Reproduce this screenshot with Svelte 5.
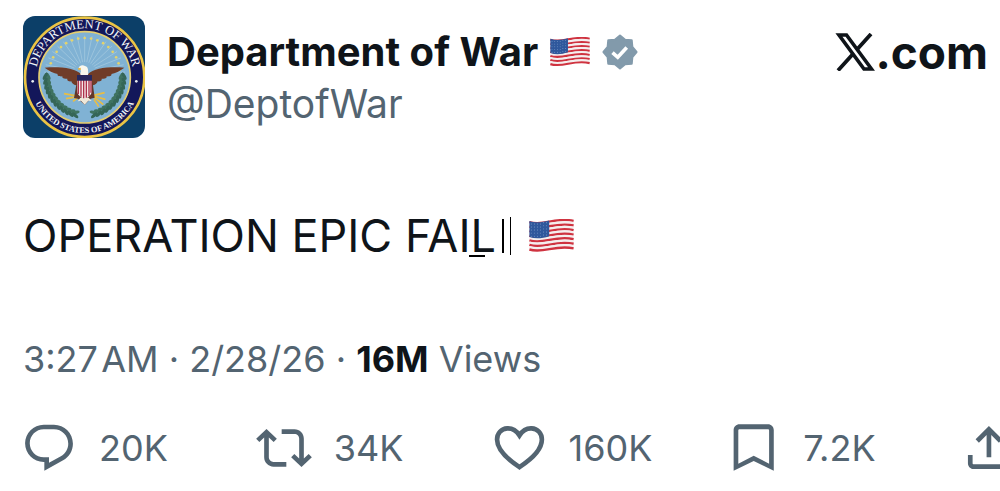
<script lang="ts">
  type Action = {
    label: string;
    count?: string;
    path: string;
    outline?: boolean;
  };

  const actions: Action[] = [
    {
      label: "Reply",
      count: "20K",
      path: "M1.751 10c0-4.42 3.584-8 8.005-8h4.366c4.49 0 8.129 3.64 8.129 8.13 0 2.96-1.607 5.68-4.196 7.11l-8.054 4.46v-3.69h-.067c-4.49.1-8.183-3.51-8.183-8.01zm8.005-6c-3.317 0-6.005 2.69-6.005 6 0 3.37 2.77 6.08 6.138 6.01l.351-.01h1.761v2.3l5.087-2.81c1.951-1.08 3.163-3.13 3.163-5.36 0-3.39-2.744-6.13-6.129-6.13H9.756z",
    },
    {
      label: "Repost",
      count: "34K",
      path: "M4.5 3.88l4.432 4.14-1.364 1.46L5.5 7.55V16c0 1.1.896 2 2 2H13v2H7.5c-2.209 0-4-1.79-4-4V7.55L1.432 9.48.068 8.02 4.5 3.88zM16.5 6H11V4h5.5c2.209 0 4 1.79 4 4v8.45l2.068-1.93 1.364 1.46-4.432 4.14-4.432-4.14 1.364-1.46 2.068 1.93V8c0-1.1-.896-2-2-2z",
    },
    {
      label: "Like",
      count: "160K",
      path: "M12.2 6.6C10.7 4.3 8.8 3.5 7 3.6 4.4 3.7 2.6 5.7 2.6 8.4c0 4.3 3.9 8.1 9.6 11.8 5.7-3.7 9.6-7.5 9.6-11.8 0-2.7-1.8-4.7-4.4-4.8-1.8-.1-3.7.7-5.2 3z",
      outline: true,
    },
    {
      label: "Bookmark",
      count: "7.2K",
      path: "M3.7 4.3c0-1.38 1.12-2.5 2.5-2.5h12.2c1.38 0 2.5 1.12 2.5 2.5v17.5l-8.6-4.2-8.6 4.2V4.3zm2.5-.3c-.28 0-.5.22-.5.5v14.2l6.6-3.4 6.6 3.4V4.5c0-.28-.22-.5-.5-.5H6.2z",
    },
    {
      label: "Share",
      path: "M12.4 2.59l5.7 5.7-1.41 1.42-3.29-3.3V16h-2V6.41l-3.3 3.3-1.41-1.42 5.71-5.7zM21.4 15l-.02 3.51c0 1.38-1.12 2.49-2.5 2.49H5.9c-1.39 0-2.5-1.12-2.5-2.5V15h2v3.5c0 .28.22.5.5.5h12.98c.28 0 .5-.22.5-.5l.02-3.5h2z",
    },
  ];

  const stripes = Array.from({ length: 13 }, (_, i) => i);

  // light rays and stars fan out above the eagle
  const rays = Array.from({ length: 17 }, (_, i) => {
    const a = ((i - 8) * 10.5 * Math.PI) / 180;
    return {
      x1: 212 + 34 * Math.sin(a),
      y1: 196 - 34 * Math.cos(a),
      x2: 212 + 122 * Math.sin(a),
      y2: 205 - 122 * Math.cos(a),
      sx: 212 + 106 * Math.sin(a),
      sy: 196 - 106 * Math.cos(a),
    };
  });

  const leaves = Array.from({ length: 12 }, (_, i) => {
    const turn = 90 - i * 7;
    const a = (turn * Math.PI) / 180;
    return {
      x: 114 * Math.sin(a),
      y: 207 + 114 * Math.cos(a),
      turn,
    };
  });
</script>

{#snippet flag()}
  <svg class="flag" viewBox="0 0 118 88" role="img" aria-label="US flag">
    {#each stripes as i}
      <path
        d="M1 {8 + i * 6}C38 {20 + i * 6} 68 {-6 + i * 6} 117 {5 + i * 6}"
        fill="none"
        stroke={i % 2 ? "#f4eeee" : "#cf3340"}
        stroke-width="6.3"
      />
    {/each}
    <path d="M1 5C18 11 34 9 53 4V45C34 51 18 53 1 47z" fill="#2f589c" />
    {#each [0, 1, 2, 3, 4] as row}
      {#each [0, 1, 2, 3, 4, 5] as col}
        <circle cx={6 + col * 8} cy={13 + row * 8 - (col > 3 ? 3 : 0)} r="1.2" fill="#a9c0e0" />
      {/each}
    {/each}
  </svg>
{/snippet}

{#snippet seal()}
  <svg class="avatar" viewBox="27 24 366 366" role="img" aria-label="Department of War seal">
    <defs>
      <path id="ring-top" d="M65 208a147 147 0 0 1 294 0" />
      <path id="ring-bottom" d="M45 208a167 167 0 0 0 334 0" />
    </defs>
    <rect x="27" y="24" width="366" height="366" fill="#0c3f68" />
    <circle cx="212" cy="208" r="179" fill="#13175a" stroke="#eac445" stroke-width="8" />
    <circle cx="212" cy="208" r="137" fill="#80b2d4" stroke="#e4cd70" stroke-width="5" />

    {#each rays as r}
      <line x1={r.x1} y1={r.y1} x2={r.x2} y2={r.y2} stroke="#9cc4dd" stroke-width="3" />
      <circle cx={r.sx} cy={r.sy} r="4" fill="#e4d36b" />
    {/each}

    {#each [-1, 1] as side}
      {#each leaves as l}
        <g transform="translate({212 + side * l.x} {l.y}) rotate({-side * l.turn})">
          <ellipse cx="0" cy="-5" rx="12" ry="5" transform="rotate({side * 28})" fill="#3f7361" />
          <ellipse cx="0" cy="5" rx="12" ry="5" transform="rotate({side * -28})" fill="#356657" />
        </g>
      {/each}
    {/each}

    <g stroke="#e8bd45" stroke-width="5" fill="none">
      <path d="M150 257l46 8M156 272l40-7M177 280l23-17M238 262l34-8M238 264l36 10M238 266l30 24M240 274l14 22" />
    </g>
    <path
      d="M202 199C182 179 136 176 92 179c13 10 28 17 39 19-3 4 4 8 14 7-2 6 6 9 15 7-2 6 5 9 12 8 1 7 8 12 17 12z"
      fill="#703c28"
    />
    <path
      d="M221 199C241 179 286 176 331 179c-13 10-28 17-39 19 3 4-4 8-14 7 2 6-6 9-15 7 2 6-5 9-12 8-1 7-8 12-17 12z"
      fill="#703c28"
    />
    <path d="M188 224h48l6 45-12 3-18 18-20-18-12-2z" fill="#62372a" />
    <path d="M199 269h25l9 10-10-1-11 12-11-12-10 2z" fill="#eee8d9" />
    <path d="M199 196c4-6 1-10-2-15l-3-1c2-8 12-11 19-6 11 2 9 15 10 24l-5 8h-18z" fill="#f8f7ee" />
    <path d="M200 179l-9 2 3 5 7-1z" fill="#e7b644" />
    <path d="M190 214h43v35c0 13-11 20-21 24-11-4-22-11-22-24z" fill="#f5e7e8" />
    <path
      d="M193 216v42M201 216v50M209 216v55M217 216v53M225 216v48M231 216v38"
      stroke="#ad314b"
      stroke-width="4"
    />
    <path d="M189 201h45v17h-45z" fill="#26275d" />

    <text class="ring-title">
      <textPath href="#ring-top" startOffset="50%" text-anchor="middle">DEPARTMENT OF WAR</textPath>
    </text>
    <text class="ring-country">
      <textPath href="#ring-bottom" startOffset="50%" text-anchor="middle">UNITED STATES OF AMERICA</textPath>
    </text>
    <circle cx="56" cy="220" r="4" fill="#e9eef2" />
    <circle cx="367" cy="220" r="4" fill="#e9eef2" />
  </svg>
{/snippet}

<article class="post">
  <header>
    {@render seal()}
    <div class="author">
      <div class="name">
        <strong>Department of War</strong>
        {@render flag()}
        <svg class="badge" viewBox="0 0 24 24" role="img" aria-label="Verified account">
          <path
            fill="#829aab"
            d="M12 1l3.4 2.9 4.4.3.4 4.4L23 12l-2.8 3.4-.4 4.4-4.4.4L12 23l-3.4-2.8-4.4-.4-.4-4.4L1 12l2.8-3.4.4-4.4 4.4-.3z"
            stroke="#829aab"
            stroke-width="1.4"
            stroke-linejoin="round"
          />
          <path d="M7 12.4l3.5 3.1 6-6.5" fill="none" stroke="#fff" stroke-width="2.4" />
        </svg>
      </div>
      <a class="handle" href="#profile">@DeptofWar</a>
    </div>
    <a class="site" href="#home" aria-label="X.com">
      <svg viewBox="0 0 38 38" fill="none" stroke="currentColor" aria-hidden="true">
        <path d="M3 2h7.5l25 34H28z" fill="none" stroke-width="3.6" />
        <path d="M35 1L21 16.5M16.5 21.5L2 37.5" fill="none" stroke-width="3.8" />
      </svg><span>.com</span>
    </a>
  </header>

  <p class="message">
    <span>OPERATION EPIC FAI<span class="marked">L</span></span>
    <span class="bar thick"></span>
    <span class="bar"></span>
    {@render flag()}
  </p>

  <p class="meta">3:27&#8202;AM · 2/28/26 · <strong>16M</strong> Views</p>

  <div class="actions">
    {#each actions as action}
      <button type="button" aria-label={action.label}>
        <svg class:outline={action.outline} viewBox="0 0 24 24" aria-hidden="true">
          <path d={action.path} />
        </svg>
        {#if action.count}<span>{action.count}</span>{/if}
      </button>
    {/each}
  </div>
</article>

<style>
  :global(body) {
    margin: 0;
    background: #fff;
  }
  .post {
    --ink: #0f1419;
    --muted: #536471;
    box-sizing: border-box;
    padding: 16px 0 14px 23px;
    overflow: hidden;
    color: var(--ink);
    font-family: Inter, "Liberation Sans", sans-serif;
  }
  svg {
    display: block;
    flex: none;
  }
  a {
    color: inherit;
    text-decoration: none;
  }
  header {
    display: flex;
    align-items: flex-start;
    gap: 22px;
    padding-right: 12px;
  }
  .avatar {
    width: 122px;
    height: 122px;
    border-radius: 12px;
  }
  .ring-title,
  .ring-country {
    fill: #f1f4f7;
    font-family: "Liberation Serif", serif;
  }
  .ring-title {
    font-size: 38px;
  }
  .ring-country {
    font-size: 25px;
    font-weight: 700;
  }
  .author {
    flex: 1;
    padding-top: 10px;
  }
  .name {
    display: flex;
    align-items: center;
    gap: 12px;
    font-size: 40px;
    line-height: 52px;
    white-space: nowrap;
  }
  .name .flag {
    width: 40px;
  }
  .badge {
    width: 36px;
    height: 36px;
  }
  .handle {
    display: block;
    color: var(--muted);
    font-size: 39px;
    line-height: 52px;
  }
  .site {
    display: flex;
    align-items: center;
    font-size: 46px;
    font-weight: 700;
    line-height: 56px;
    padding-top: 8px;
  }
  .site svg {
    width: 40px;
    height: 38px;
  }
  .message {
    display: flex;
    align-items: center;
    gap: 6px;
    margin: 68px 0 0;
    font-size: 45px;
    line-height: 60px;
    white-space: nowrap;
  }
  .message .flag {
    width: 45px;
    margin-left: 12px;
  }
  .marked {
    position: relative;
  }
  .marked::before {
    content: "";
    position: absolute;
    left: -2px;
    bottom: 6px;
    width: 16px;
    height: 2px;
    background: #000;
  }
  .bar {
    width: 1px;
    height: 38px;
    background: #000;
  }
  .bar.thick {
    width: 2px;
    height: 34px;
  }
  .meta {
    margin: 68px 0 0;
    color: var(--muted);
    font-size: 36px;
    line-height: 50px;
    white-space: nowrap;
  }
  .meta strong {
    color: var(--ink);
  }
  .actions {
    display: grid;
    grid-template-columns: repeat(4, minmax(0, 1fr)) 40px;
    margin: 36px 0 0 -2px;
  }
  button {
    display: flex;
    align-items: center;
    gap: 22px;
    padding: 0;
    border: 0;
    background: none;
    color: var(--muted);
    font: inherit;
    font-size: 36px;
    line-height: 56px;
    cursor: pointer;
  }
  button svg {
    width: 56px;
    height: 56px;
    fill: currentColor;
  }
  button .outline {
    fill: none;
    stroke: currentColor;
    stroke-width: 2;
  }
</style>
